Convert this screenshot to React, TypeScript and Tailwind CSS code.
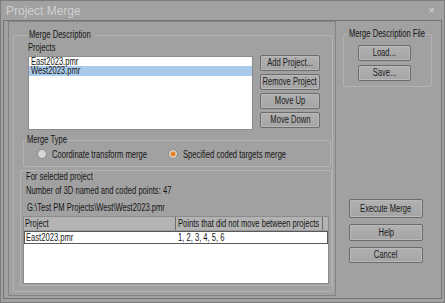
const ui = "font-['Liberation_Sans',Arial,sans-serif]";

// text in the reference is narrow; squeeze it horizontally
function T({ children, c }: { children: React.ReactNode; c?: boolean }) {
  return (
    <span className={`inline-block whitespace-nowrap scale-x-[0.76] ${c ? "origin-center" : "origin-left"}`}>
      {children}
    </span>
  );
}

function Btn({ children, className = "" }: { children: React.ReactNode; className?: string }) {
  return (
    <div
      className={`flex items-center justify-center border border-[#6c6c6c] rounded-[2px] bg-gradient-to-b from-[#b1b1b1] to-[#a4a4a4] text-[#1c1c1c] leading-none shadow-[inset_0_0_0_1px_#b9b9b9] ${className}`}
    >
      <T c>{children}</T>
    </div>
  );
}

function Radio({ checked }: { checked?: boolean }) {
  return (
    <span className="w-[10px] h-[10px] rounded-full border border-[#8a8a8a] bg-[#d6d6d6] flex items-center justify-center">
      {checked && <span className="w-[6px] h-[6px] rounded-full bg-[#e2781c] border border-[#f0b070]" />}
    </span>
  );
}

export default function App() {
  return (
    <div className={`w-[445px] h-[303px] bg-[#a1a1a1] border border-[#7c7c7c] flex flex-col text-[10px] text-[#161616] ${ui}`}>
      {/* title bar */}
      <div className="h-[19px] flex items-center justify-between pl-[5px] pr-[9px]">
        <span className="text-[12px] text-[#d0d0d0]">Project Merge</span>
        <span className="text-[11px] text-[#d6d6d6]">×</span>
      </div>

      {/* client */}
      <div className="flex-1 mx-[2px] mb-[3px] border border-[#747474] flex">
        {/* left panel */}
        <div className="ml-[4px] w-[328px] h-[275px] border border-[#858585]">
          <fieldset className="ml-[4px] mt-[7px] w-[319px] h-[263px] border border-[#b3b3b3] rounded-[2px] pl-[9px]">
            <legend className="ml-[5px] px-[1px] w-[67px] leading-[12px]">
              <T>Merge Description</T>
            </legend>

            <div className="ml-[5px] mt-[1px] leading-[12px]">
              <T>Projects</T>
            </div>
            <div className="ml-[5px] mt-[2px] flex">
              <div className="w-[225px] h-[74px] bg-white border border-[#8c8c8c]">
                <div className="pl-[2px] h-[9px] leading-[9px]">
                  <T>East2023.pmr</T>
                </div>
                <div className="pl-[2px] h-[10px] leading-[10px] bg-[#a9caeb]">
                  <T>West2023.pmr</T>
                </div>
              </div>
              <div className="ml-[7px] -mt-[1px] w-[60px] flex flex-col gap-[3px]">
                <Btn className="h-[16px]">Add Project...</Btn>
                <Btn className="h-[16px]">Remove Project</Btn>
                <Btn className="h-[16px]">Move Up</Btn>
                <Btn className="h-[16px]">Move Down</Btn>
              </div>
            </div>

            <fieldset className="mt-[4px] w-[308px] h-[33px] border border-[#b3b3b3] rounded-[2px]">
              <legend className="ml-[2px] px-[1px] w-[42px] leading-[12px]">
                <T>Merge Type</T>
              </legend>
              <div className="flex items-center h-[14px] mt-[1px]">
                <span className="ml-[13px]">
                  <Radio />
                </span>
                <span className="ml-[5px] w-[116px]">
                  <T>Coordinate transform merge</T>
                </span>
                <Radio checked />
                <span className="ml-[5px]">
                  <T>Specified coded targets merge</T>
                </span>
              </div>
            </fieldset>

            <div className="mt-[3px] -ml-[3px] w-[312px] h-[116px] border border-[#b3b3b3] rounded-[2px] flex flex-col">
              <div className="pl-[5px] leading-[11px]">
                <T>For selected project</T>
              </div>
              <div className="pl-[5px] mt-[3px] leading-[11px] flex">
                <span className="w-[137px]">
                  <T>Number of 3D named and coded points:</T>
                </span>
                <T>47</T>
              </div>
              <div className="pl-[6px] mt-[6px] leading-[11px]">
                <T>G:\Test PM Projects\West\West2023.pmr</T>
              </div>
              <div className="ml-[2px] mt-[3px] w-[306px] h-[68px] border border-[#8c8c8c] bg-white flex flex-col">
                <div className="h-[14px] bg-[#b3b3b3] flex leading-[14px] border-b border-[#9a9a9a]">
                  <div className="w-[152px] pl-[1px] border-r border-[#6e6e6e]">
                    <T>Project</T>
                  </div>
                  <div className="w-[147px] pl-[2px] border-r border-[#6e6e6e]">
                    <T>Points that did not move between projects</T>
                  </div>
                </div>
                <div className="h-[13px] flex leading-[11px] border border-[#5a5a5a]">
                  <div className="w-[151px] pl-[1px]">
                    <T>East2023.pmr</T>
                  </div>
                  <div className="pl-[2px]">
                    <T>1, 2, 3, 4, 5, 6</T>
                  </div>
                </div>
              </div>
            </div>
          </fieldset>
        </div>

        {/* right column */}
        <div className="flex-1 flex flex-col">
          <fieldset className="ml-[7px] mt-[7px] w-[89px] h-[59px] border border-[#b3b3b3] rounded-[2px]">
            <legend className="ml-[4px] px-[1px] w-[79px] leading-[12px]">
              <T>Merge Description File</T>
            </legend>
            <div className="ml-[14px] mt-[5px] w-[53px] flex flex-col gap-[4px]">
              <Btn className="h-[16px]">Load...</Btn>
              <Btn className="h-[16px]">Save...</Btn>
            </div>
          </fieldset>
          <div className="ml-[13px] mt-[112px] w-[74px] flex flex-col">
            <Btn className="h-[19px]">Execute Merge</Btn>
            <Btn className="h-[17px] mt-[6px]">Help</Btn>
            <Btn className="h-[16px] mt-[6px]">Cancel</Btn>
          </div>
        </div>
      </div>
    </div>
  );
}
